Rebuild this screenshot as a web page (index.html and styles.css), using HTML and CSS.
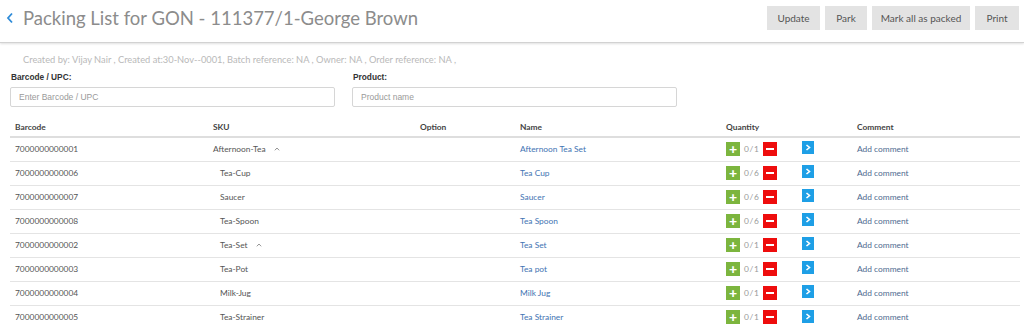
FILE: index.html
```html
<!DOCTYPE html>
<html lang="en">
<head>
  <meta charset="UTF-8">
  <title>Packing List</title>
  <link rel="stylesheet" href="styles.css">
</head>
<body>
  <!-- Top bar -->
  <header class="topbar">
    <div class="title">
      <svg class="back" width="8" height="12" viewBox="0 0 8 12"><polyline points="6,1.5 2,6 6,10.5" fill="none" stroke="#2e8bd8" stroke-width="1.8"/></svg>
      <h1>Packing List for GON - 111377/1-George Brown</h1>
    </div>
    <div class="actions">
      <button class="btn btn-update">Update</button>
      <button class="btn btn-park">Park</button>
      <button class="btn btn-mark">Mark all as packed</button>
      <button class="btn btn-print">Print</button>
    </div>
  </header>

  <main class="content">
    <p class="meta">Created by: Vijay Nair , Created at:30-Nov--0001, Batch reference: NA , Owner: NA , Order reference: NA ,</p>

    <div class="filters">
      <label class="field">
        <span>Barcode / UPC:</span>
        <input type="text" placeholder="Enter Barcode / UPC">
      </label>
      <label class="field">
        <span>Product:</span>
        <input type="text" placeholder="Product name">
      </label>
    </div>

    <div class="table">
      <div class="row head">
        <div>Barcode</div>
        <div>SKU</div>
        <div>Option</div>
        <div>Name</div>
        <div>Quantity</div>
        <div>Comment</div>
      </div>
      <div id="rows"></div>
    </div>
  </main>

  <script>
    // barcode, sku, name, qty, is child, has caret
    const items = [
      ['7000000000001', 'Afternoon-Tea', 'Afternoon Tea Set', 1, false, true],
      ['7000000000006', 'Tea-Cup', 'Tea Cup', 6, true, false],
      ['7000000000007', 'Saucer', 'Saucer', 6, true, false],
      ['7000000000008', 'Tea-Spoon', 'Tea Spoon', 6, true, false],
      ['7000000000002', 'Tea-Set', 'Tea Set', 1, true, true],
      ['7000000000003', 'Tea-Pot', 'Tea pot', 1, true, false],
      ['7000000000004', 'Milk-Jug', 'Milk Jug', 1, true, false],
      ['7000000000005', 'Tea-Strainer', 'Tea Strainer', 1, true, false]
    ];

    const html = items.map(function(it) {
      const caret = it[5]
        ? '<svg class="toggle" width="6" height="4" viewBox="0 0 6 4"><polyline points="0.8,3.3 3,1 5.2,3.3" fill="none" stroke="#888" stroke-width="0.9"/></svg>'
        : '';
      return '<div class="row">' +
        '<div>' + it[0] + '</div>' +
        '<div class="sku' + (it[4] ? ' child' : '') + '">' + it[1] + caret + '</div>' +
        '<div></div>' +
        '<div><a class="name" href="#">' + it[2] + '</a></div>' +
        '<div class="qty">' +
          '<span class="q-btn plus">+</span>' +
          '<span class="count">0 / ' + it[3] + '</span>' +
          '<span class="q-btn minus"><i></i></span>' +
          '<span class="go"><svg width="6" height="7" viewBox="0 0 6 7"><polyline points="1.5,1 4.5,3.5 1.5,6" fill="none" stroke="#fff" stroke-width="1.6"/></svg></span>' +
        '</div>' +
        '<div><a class="comment" href="#">Add comment</a></div>' +
      '</div>';
    }).join('');
    document.getElementById('rows').innerHTML = html;
  </script>
</body>
</html>
```

FILE: styles.css
```css
:root {
  --text: #333;
  --border: #e4e4e4;
  --link: #3f74b3;
  --green: #7cb53e;
  --red: #ee0d0d;
  --blue: #1e9fe6;
}

body {
  margin: 0;
  font-family: Lato, "Open Sans", sans-serif;
  color: var(--text);
  background: #fff;
}

.topbar {
  height: 42px;
  display: flex;
  align-items: center;
  justify-content: space-between;
  padding: 0 5px 0 6px;
  border-bottom: 1px solid #d2d2d2;
  box-shadow: 0 1px 2px rgba(0,0,0,0.12);
}

.title {
  display: flex;
  align-items: center;
  gap: 9px;
  margin-top: -7px;
}

.title h1 {
  margin: 0;
  font-size: 18.5px;
  font-weight: 400;
  color: #8c8c8c;
}

.actions {
  display: flex;
  gap: 5px;
  margin-top: -6px;
}

.btn {
  height: 24px;
  border: none;
  background: #e3e3e3;
  color: #555;
  font-family: Lato, sans-serif;
  font-size: 10px;
  padding: 0;
  white-space: nowrap;
  cursor: pointer;
}

.btn-update { width: 53px; }
.btn-park { width: 42px; }
.btn-mark { width: 98px; }
.btn-print { width: 44px; }

.content {
  padding: 0 4px 0 10px;
}

.meta {
  margin: 11px 0 0 13px;
  font-size: 9.3px;
  line-height: 12px;
  color: #b9b9b9;
}

.filters {
  display: flex;
  gap: 17px;
  margin-top: 6px;
}

.field {
  display: flex;
  flex-direction: column;
  gap: 5px;
  width: 325px;
}

.field span {
  font-family: "Liberation Sans", Arial, sans-serif;
  font-weight: 700;
  font-size: 8.3px;
  line-height: 10px;
  color: #333;
  padding-left: 1px;
}

.field input {
  height: 20px;
  box-sizing: border-box;
  border: 1px solid #d6d6d6;
  border-radius: 2px;
  padding: 0 8px;
  font-family: "Liberation Sans", Arial, sans-serif;
  font-size: 8.5px;
  color: #333;
}

.field input::placeholder {
  color: #9a9a9a;
}

.table {
  margin-top: 10px;
}

.row {
  display: grid;
  grid-template-columns: 198px 207px 100px 206px 131px 1fr;
  align-items: center;
  height: 24px;
  box-sizing: border-box;
  padding-bottom: 2px;
  border-bottom: 1px solid var(--border);
  font-size: 8.4px;
  color: #555;
}

.row > div {
  padding-left: 5px;
}

.row.head {
  height: 21px;
  padding-bottom: 0;
  border-bottom: 2px solid #dedede;
  font-weight: 700;
  color: #444;
}

#rows .row:last-child {
  border-bottom: none;
}

.sku {
  display: flex;
  align-items: center;
}

.sku.child {
  padding-left: 12px;
}

.toggle {
  margin-left: 8px;
}

.name {
  color: var(--link);
  text-decoration: none;
}

.comment {
  color: #4f6b90;
  text-decoration: none;
}

.qty {
  display: flex;
  align-items: center;
}

.q-btn {
  width: 14px;
  height: 14px;
  display: inline-flex;
  align-items: center;
  justify-content: center;
  color: #fff;
  font-weight: 900;
  font-size: 14px;
  line-height: 14px;
}

.plus {
  background: var(--green);
}

.minus {
  background: var(--red);
}

.minus i {
  width: 8px;
  height: 2px;
  background: #fff;
}

.count {
  color: #999;
  font-size: 8.4px;
  margin: 0 4px;
  word-spacing: -1.5px;
}

.go {
  width: 12px;
  height: 13px;
  margin-left: 25px;
  background: var(--blue);
  display: inline-flex;
  align-items: center;
  justify-content: center;
  margin-top: -2px;
}
```
